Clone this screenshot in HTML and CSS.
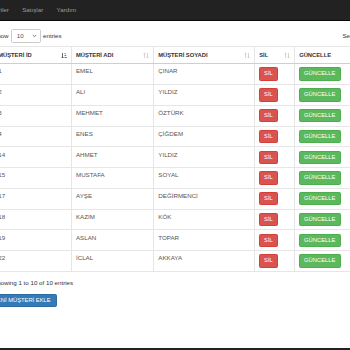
FILE: index.html
```html
<!DOCTYPE html>
<html lang="tr">

<head>
    <meta charset="UTF-8">
    <meta name="viewport" content="width=device-width, initial-scale=1.0">
    <title>Müşteriler</title>
    <link rel="stylesheet" href="styles.css">
</head>

<body>
    <nav class="navbar">
        <ul class="nav">
            <li><a href="#">Müşteriler</a></li>
            <li><a href="#">Satışlar</a></li>
            <li><a href="#">Yardım</a></li>
        </ul>
    </nav>

    <div class="page">
        <div class="dt-top">
            <div class="dt-length">
                <span>Show</span>
                <span class="select">10
                    <svg width="5" height="4" viewBox="0 0 5 4"><path d="M0.8 1l1.7 1.7L4.2 1" fill="none" stroke="#555" stroke-width="0.8"/></svg>
                </span>
                <span>entries</span>
            </div>
            <div class="dt-filter">
                <span>Search:</span>
                <span class="search"></span>
            </div>
        </div>

        <table class="grid">
            <colgroup>
                <col style="width: 77.7px">
                <col style="width: 82.3px">
                <col style="width: 101px">
                <col style="width: 40px">
                <col>
            </colgroup>
            <thead>
                <tr>
                    <th><div class="th-in">MÜŞTERİ İD
                        <svg class="sort" width="6" height="7" viewBox="0 0 6 7"><path d="M1.5 1v5M0.4 4.9L1.5 6l1.1-1.1" fill="none" stroke="#444" stroke-width="0.8"/><path d="M3.6 1.5h1M3.6 3.5h1.6M3.6 5.5h2.2" stroke="#444" stroke-width="0.8"/></svg>
                    </div></th>
                    <th><div class="th-in">MÜŞTERİ ADI
                        <svg class="sort" width="6" height="7" viewBox="0 0 6 7"><path d="M1.5 6V1M0.4 2.1L1.5 1l1.1 1.1M4.5 1v5M3.4 4.9L4.5 6l1.1-1.1" fill="none" stroke="#ccc" stroke-width="0.8"/></svg>
                    </div></th>
                    <th><div class="th-in">MÜŞTERİ SOYADI
                        <svg class="sort" width="6" height="7" viewBox="0 0 6 7"><path d="M1.5 6V1M0.4 2.1L1.5 1l1.1 1.1M4.5 1v5M3.4 4.9L4.5 6l1.1-1.1" fill="none" stroke="#ccc" stroke-width="0.8"/></svg>
                    </div></th>
                    <th><div class="th-in">SİL
                        <svg class="sort" width="6" height="7" viewBox="0 0 6 7"><path d="M1.5 6V1M0.4 2.1L1.5 1l1.1 1.1M4.5 1v5M3.4 4.9L4.5 6l1.1-1.1" fill="none" stroke="#ccc" stroke-width="0.8"/></svg>
                    </div></th>
                    <th>GÜNCELLE</th>
                </tr>
            </thead>
            <tbody>
                <tr><td>1</td><td>EMEL</td><td>ÇINAR</td><td><button class="btn btn-danger">SİL</button></td><td><button class="btn btn-success">GÜNCELLE</button></td></tr>
                <tr><td>2</td><td>ALI</td><td>YILDIZ</td><td><button class="btn btn-danger">SİL</button></td><td><button class="btn btn-success">GÜNCELLE</button></td></tr>
                <tr><td>3</td><td>MEHMET</td><td>ÖZTÜRK</td><td><button class="btn btn-danger">SİL</button></td><td><button class="btn btn-success">GÜNCELLE</button></td></tr>
                <tr><td>4</td><td>ENES</td><td>ÇİĞDEM</td><td><button class="btn btn-danger">SİL</button></td><td><button class="btn btn-success">GÜNCELLE</button></td></tr>
                <tr><td>14</td><td>AHMET</td><td>YILDIZ</td><td><button class="btn btn-danger">SİL</button></td><td><button class="btn btn-success">GÜNCELLE</button></td></tr>
                <tr><td>15</td><td>MUSTAFA</td><td>SOYAL</td><td><button class="btn btn-danger">SİL</button></td><td><button class="btn btn-success">GÜNCELLE</button></td></tr>
                <tr><td>17</td><td>AYŞE</td><td>DEĞİRMENCİ</td><td><button class="btn btn-danger">SİL</button></td><td><button class="btn btn-success">GÜNCELLE</button></td></tr>
                <tr><td>18</td><td>KAZIM</td><td>KÖK</td><td><button class="btn btn-danger">SİL</button></td><td><button class="btn btn-success">GÜNCELLE</button></td></tr>
                <tr><td>19</td><td>ASLAN</td><td>TOPAR</td><td><button class="btn btn-danger">SİL</button></td><td><button class="btn btn-success">GÜNCELLE</button></td></tr>
                <tr><td>22</td><td>İCLAL</td><td>AKKAYA</td><td><button class="btn btn-danger">SİL</button></td><td><button class="btn btn-success">GÜNCELLE</button></td></tr>
            </tbody>
        </table>

        <div class="dt-info">Showing 1 to 10 of 10 entries</div>

        <button class="btn btn-primary btn-add">YENİ MÜŞTERİ EKLE</button>
    </div>

    <footer class="footer"></footer>
</body>

</html>
```

FILE: styles.css
```css
html,
body {
    height: 100%;
}

body {
    margin: 0;
    font-family: "Liberation Sans", Arial, sans-serif;
    font-size: 6.2px;
    line-height: 8.9px;
    color: #333;
    background-color: #fff;
    overflow: hidden;
}

.navbar {
    height: 21px;
    background-color: #222;
    border-bottom: 1px solid #080808;
    box-sizing: border-box;
}

.nav {
    list-style: none;
    margin: 0 0 0 -25px;
    padding: 0;
    height: 100%;
    display: flex;
    align-items: center;
}

.nav a {
    display: block;
    padding: 0 6.7px;
    color: #9d9d9d;
    text-decoration: none;
}

.page {
    width: 449px;
    margin-left: -7px;
    padding-top: 8.3px;
    min-height: 327px;
    box-sizing: border-box;
}

.dt-top {
    display: flex;
    justify-content: space-between;
    align-items: center;
    height: 13.4px;
}

.dt-length,
.dt-filter {
    display: flex;
    align-items: center;
    gap: 2.3px;
}

.select {
    display: flex;
    align-items: center;
    justify-content: space-between;
    width: 30px;
    height: 13.4px;
    padding: 0 3px 0 5px;
    border: 1px solid #ccc;
    border-radius: 1.5px;
    box-sizing: border-box;
    color: #555;
}

.search {
    display: block;
    width: 76px;
    height: 13.4px;
    border: 1px solid #ccc;
    border-radius: 1.5px;
    box-sizing: border-box;
}

.grid {
    width: 100%;
    margin-top: 3.7px;
    border-collapse: collapse;
    table-layout: fixed;
    border: 1px solid #e6e6e6;
}

.grid th,
.grid td {
    border: 1px solid #e6e6e6;
    padding: 3.2px 3.6px;
    text-align: left;
    vertical-align: top;
    white-space: nowrap;
}

.grid th {
    padding: 3.5px 4.2px;
    font-size: 5.8px;
    font-weight: bold;
    color: #333;
    border-bottom-color: #cfcfcf;
}

.grid td {
    color: #555;
}

.grid td:nth-child(-n+3) {
    padding-left: 4.3px;
}

.th-in {
    display: flex;
    justify-content: space-between;
    align-items: center;
}

.sort {
    display: block;
}

.btn {
    display: inline-block;
    height: 13.4px;
    padding: 0 4.5px;
    font-family: "Liberation Sans", Arial, sans-serif;
    font-size: 5.8px;
    line-height: 11.4px;
    color: white;
    border: 1px solid transparent;
    border-radius: 1.5px;
    box-sizing: border-box;
    cursor: pointer;
    vertical-align: top;
}

.btn-danger {
    background-color: #d9534f;
    border-color: #d43f3a;
}

.btn-success {
    background-color: #5cb85c;
    border-color: #4cae4c;
}

.btn-primary {
    background-color: #337ab7;
    border-color: #2e6da4;
}

.dt-info {
    margin-top: 7.2px;
}

.btn-add {
    margin-top: 5.9px;
    margin-left: -6px;
    padding: 0 5px;
}

.footer {
    height: 30px;
    background-color: #222;
}
```
